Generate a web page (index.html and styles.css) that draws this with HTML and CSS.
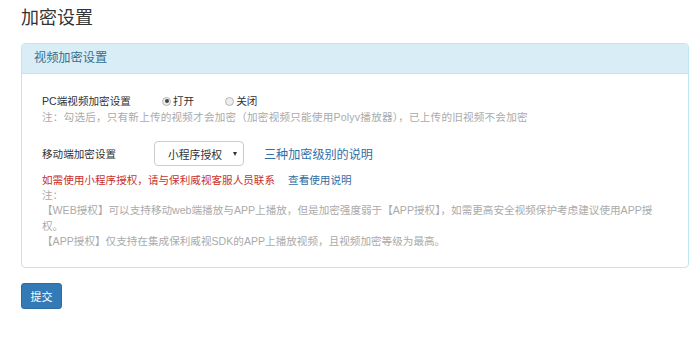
FILE: index.html
```html
<!DOCTYPE html>
<html lang="zh-CN">
<head>
<meta charset="utf-8">
<link rel="stylesheet" href="styles.css">
</head>
<body>
<h1 class="title">加密设置</h1>
<div class="panel">
  <div class="panel-heading">视频加密设置</div>
  <div class="panel-body">
    <div class="row row-pc">
      <span class="label label-pc">PC端视频加密设置</span>
      <span class="radio checked"><i></i>打开</span>
      <span class="radio"><i></i>关闭</span>
    </div>
    <div class="note">注：勾选后，只有新上传的视频才会加密（加密视频只能使用Polyv播放器），已上传的旧视频不会加密</div>
    <div class="row row-mobile">
      <span class="label label-mobile">移动端加密设置</span>
      <div class="select">小程序授权<span class="caret"></span></div>
      <a class="link-big">三种加密级别的说明</a>
    </div>
    <div class="warn"><span class="red">如需使用小程序授权，请与保利威视客服人员联系</span><a class="link-small">查看使用说明</a></div>
    <div class="notes">
      <div>注：</div>
      <div>【WEB授权】可以支持移动web端播放与APP上播放，但是加密强度弱于【APP授权】，如需更高安全视频保护考虑建议使用APP授权。</div>
      <div>【APP授权】仅支持在集成保利威视SDK的APP上播放视频，且视频加密等级为最高。</div>
    </div>
  </div>
</div>
<button class="btn">提交</button>
</body>
</html>
```

FILE: styles.css
```css
html, body {
  margin: 0;
  padding: 0;
  background: #fff;
}
body {
  padding: 8px 11px 0 21px;
  font-family: "Liberation Sans", "Noto Sans CJK SC", sans-serif;
  color: #333;
}
.title {
  margin: 0;
  font-size: 18px;
  line-height: 21px;
  font-weight: normal;
  color: #333;
}
.panel {
  margin-top: 14px;
  border: 1px solid #bce8f1;
  border-radius: 4px;
  background: #fff;
}
.panel-heading {
  height: 29px;
  line-height: 29px;
  padding-left: 12px;
  background: #d9edf7;
  border-bottom: 1px solid #bce8f1;
  border-radius: 3px 3px 0 0;
  color: #31708f;
  font-size: 12.2px;
}
.panel-body {
  padding: 19px 20px 18px 20px;
  font-size: 10.6px;
}
.row {
  display: flex;
  align-items: center;
}
.row-pc {
  height: 16px;
  line-height: 16px;
}
.label-pc {
  width: 120px;
}
.label-mobile {
  width: 112px;
}
.radio {
  display: inline-flex;
  align-items: center;
  margin-right: 31px;
}
.radio i {
  display: inline-block;
  width: 9px;
  height: 9px;
  border: 1px solid #b5b5b5;
  border-radius: 50%;
  margin-right: 2px;
  box-sizing: border-box;
  position: relative;
  background: #eee;
}
.radio.checked i::after {
  content: "";
  position: absolute;
  left: 1.5px;
  top: 1.5px;
  width: 4px;
  height: 4px;
  border-radius: 50%;
  background: #444;
}
.note {
  line-height: 16px;
  color: #aaa;
  letter-spacing: 0.2px;
}
.row-mobile {
  margin-top: 16px;
  height: 25px;
}
.select {
  box-sizing: border-box;
  width: 90px;
  height: 25px;
  border: 1px solid #ccc;
  border-radius: 4px;
  padding-left: 13px;
  display: flex;
  align-items: center;
  font-size: 10.8px;
  color: #333;
  position: relative;
}
.caret {
  position: absolute;
  right: 6px;
  top: 10px;
  width: 0;
  height: 0;
  border-left: 2.5px solid transparent;
  border-right: 2.5px solid transparent;
  border-top: 4px solid #333;
}
.link-big {
  margin-left: 20px;
  font-size: 12.1px;
  color: #2f6ea5;
}
.warn {
  margin-top: 6px;
  line-height: 16px;
}
.red {
  color: #c9302c;
}
.link-small {
  margin-left: 13px;
  color: #2f6ea5;
}
.notes {
  line-height: 15.3px;
  color: #aaa;
}
.btn {
  display: block;
  margin-top: 15px;
  width: 41px;
  height: 26px;
  padding: 0;
  border: 1px solid #2e6da4;
  border-radius: 3px;
  background: #337ab7;
  color: #fff;
  font-family: "Liberation Sans", "Noto Sans CJK SC", sans-serif;
  font-size: 11px;
}
```
